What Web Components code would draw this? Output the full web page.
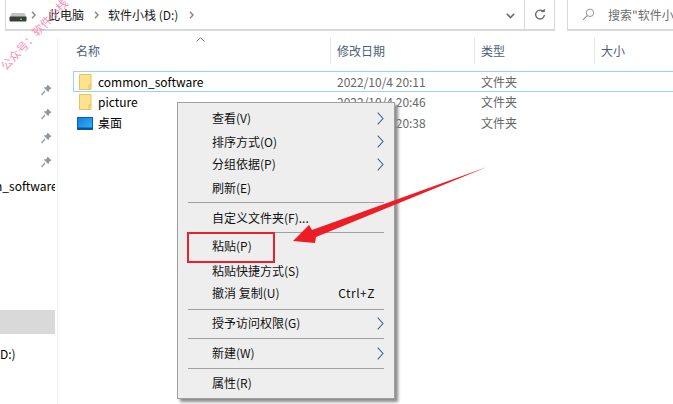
<!DOCTYPE html>
<html><head><meta charset="utf-8">
<style>
html,body{margin:0;height:100%;background:#fff;overflow:hidden}
body{font:12px/16px "Noto Sans CJK SC","Noto Sans",sans-serif;color:#111}
</style></head><body>
<template id="t-win"><style>
:host{display:grid;grid-template-rows:31px 1fr;width:673px;height:404px;position:relative;overflow:hidden}
</style><ex-toolbar></ex-toolbar><div style="display:grid;grid-template-columns:58px 1fr;min-height:0"><ex-nav></ex-nav><ex-list></ex-list></div><slot></slot></template>

<template id="t-toolbar"><style>
:host{display:flex;align-items:stretch;height:31px;box-sizing:border-box;padding-left:5px;color:#1a1a1a}
.addr{display:flex;align-items:center;width:519px;box-sizing:border-box;border:solid #d9d9d9;border-width:1px 0 2px 1px;padding-left:3px;position:relative;margin-top:-1px}
.refresh{display:flex;align-items:center;justify-content:center;width:31px;box-sizing:border-box;border:solid #d9d9d9;border-width:1px 1px 2px 1px;margin-top:-1px}
.search{display:flex;align-items:center;margin-left:12px;flex:1;box-sizing:border-box;border:solid #d9d9d9;border-width:1px 0 2px 1px;margin-top:-1px;padding-left:14px;color:#6d6d6d;white-space:nowrap;overflow:hidden}
.search svg{margin-right:13px;flex:none}
.crumb{white-space:nowrap}
.sep{flex:none}
.drop{position:absolute;right:9px;top:13px}
</style>
<div class="addr">
<svg width="18" height="9" viewBox="0 0 18 9" style="flex:none;margin-top:6px"><path d="M2.500 0h13l2 4.500H.5z" fill="#c4c4c4"/><rect x=".5" y="3.500" width="17" height="5" rx="1" fill="#3c3c3c"/><rect x="11" y="5.500" width="2" height="1.500" fill="#3fdc5a"/></svg>
<svg class="sep" width="5" height="8" viewBox="0 0 5 8" style="margin-left:4px;margin-right:12px"><path d="M1 .8 4 4 1 7.2" fill="none" stroke="#8a8a8a" stroke-width="1.5"/></svg>
<span class="crumb">此电脑</span>
<svg class="sep" width="5" height="8" viewBox="0 0 5 8" style="margin-left:10px;margin-right:9px"><path d="M1 .8 4 4 1 7.2" fill="none" stroke="#8a8a8a" stroke-width="1.5"/></svg>
<span class="crumb">软件小栈 (D:)</span>
<svg class="sep" width="5" height="8" viewBox="0 0 5 8" style="margin-left:11px"><path d="M1 .8 4 4 1 7.2" fill="none" stroke="#8a8a8a" stroke-width="1.5"/></svg>
<svg class="drop" width="9" height="6" viewBox="0 0 9 6"><path d="M.8.8 4.500 4.500 8.200.8" fill="none" stroke="#6d6d6d" stroke-width="1.600"/></svg>
</div>
<div class="refresh"><svg width="12" height="13" viewBox="0 0 12 13"><path d="M9.600 4A4.400 4.400 0 1 0 10.400 7" fill="none" stroke="#6a6a6a" stroke-width="1.400"/><path d="M6.600 4h4.200V.8z" fill="#6a6a6a"/></svg></div>
<div class="search"><svg width="13" height="13" viewBox="0 0 14 14"><circle cx="8.600" cy="5.200" r="4" fill="none" stroke="#8a8a8a"/><path d="M5.700 8.100 1 12.800" stroke="#8a8a8a" stroke-width="1.200"/></svg>搜索"软件小栈 (D:)"</div>
</template>

<template id="t-nav"><style>
:host{display:flex;flex-direction:column;box-sizing:border-box;padding-top:39px;width:58px;border-right:1px solid #f0f0f0;margin-top:7px;overflow:hidden}
.pin{height:24px;display:flex;align-items:center;justify-content:flex-end;width:52px;box-sizing:border-box}
.t{width:55px;height:24px;line-height:24px;overflow:hidden;white-space:nowrap;color:#000}
.sel{width:55px;height:24px;background:#d9d9d9;margin-top:112px}
</style>
<div class="pin"><ex-pin></ex-pin></div><div class="pin"><ex-pin></ex-pin></div><div class="pin"><ex-pin></ex-pin></div><div class="pin"><ex-pin></ex-pin></div>
<div class="t" style="margin-top:1px;text-indent:-5px">n_software</div>
<div class="sel"></div>
<div class="t" style="margin-top:8px">D:)</div>
</template>

<template id="t-list"><style>
:host{display:block;position:relative;min-width:0}
.head{display:grid;grid-template-columns:273px 144px 120px 1fr;height:26px;margin-top:7px;position:relative;color:#4c607a}
.head div{border-right:1px solid #e5e5e5;line-height:26px;box-sizing:border-box;padding-left:18px;height:26px}
.head div:nth-child(n+2){padding-left:6px}
.head div:last-of-type{border:0}
.caret{position:absolute;left:138px;top:-1px}
.rows{margin-top:7px;padding-left:15px;padding-right:2px}
</style>
<div class="head"><div>名称</div><div>修改日期</div><div>类型</div><div>大小</div><svg class="caret" width="9" height="5" viewBox="0 0 9 5"><path d="M.5 4.500 4.500.8l4 3.700" fill="none" stroke="#777"/></svg></div>
<div class="rows">
<ex-row selected name="common_software" date="2022/10/4 20:11" type="文件夹"></ex-row>
<ex-row style="height:20px" name="picture" date="2022/10/4 20:46" type="文件夹"></ex-row>
<ex-row style="height:22px" icon="desk" name="桌面" date="2022/10/4 20:38" type="文件夹"></ex-row>
</div></template>

<template id="t-menu"><style>
:host{position:absolute;left:177px;top:102px;width:218px;box-sizing:border-box;background:#eee;border:1px solid #a0a0a0;box-shadow:3px 3px 3px #8a8a8a;padding:4px 2px 1px;display:block;color:#111}
</style><slot></slot></template>

<template id="t-mi"><style>
:host{display:flex;align-items:center;height:var(--h,22px);padding-left:32px;padding-right:8px;white-space:nowrap;justify-content:space-between}
svg{display:block}
#r.k{margin-right:9px;letter-spacing:.5px}
</style><span><slot></slot></span><span id="r"></span></template>

<template id="t-ms"><style>:host{display:block;height:1px;background:#a0a0a0;margin:0 8px}</style></template>

<script>
const def=(n,id,extra)=>customElements.define(n,class extends HTMLElement{constructor(){super();this.attachShadow({mode:'open'}).append(document.getElementById(id).content.cloneNode(true));}connectedCallback(){extra&&extra(this)}});
def('ex-toolbar','t-toolbar');def('ex-nav','t-nav');def('ex-list','t-list');def('ex-win','t-win');def('ex-menu','t-menu');def('ex-ms','t-ms');
def('ex-mi','t-mi',el=>{const r=el.shadowRoot.getElementById('r');
 if(el.hasAttribute('sub'))r.innerHTML='<svg width="7" height="13" viewBox="0 0 7 13"><path d="M.7.7 6 6.500.7 12.300" fill="none" stroke="#3f6596" stroke-width="1.100"/></svg>';
 else if(el.getAttribute('key')){r.textContent=el.getAttribute('key');r.className='k';}
 if(el.getAttribute('h'))el.style.setProperty('--h',el.getAttribute('h')+'px');
 if(el.getAttribute('mb'))el.style.marginBottom=el.getAttribute('mb')+'px';});
customElements.define('ex-pin',class extends HTMLElement{constructor(){super();this.attachShadow({mode:'open'}).innerHTML='<style>:host{display:block;height:12px}</style><svg width="11" height="12" viewBox="0 0 11 12"><path d="M6.500.5 10.500 4.500 9.300 5 8 6l-.4 2.600L2.600 3.600 5 3.200 6 2z" fill="#8f979e"/><path d="M4 7 .6 11" stroke="#8f979e" stroke-width="1.200"/></svg>';}});
customElements.define('ex-row',class extends HTMLElement{constructor(){super();const s=this.attachShadow({mode:'open'});
 const a=k=>this.getAttribute(k)||'';
 const icon=a('icon')==='desk'?'<svg width="16" height="13" viewBox="0 0 16 13" style="margin:0 5px 0 -2px"><defs><linearGradient id="g" x1="0" y1="0" x2="1" y2="1"><stop offset="0" stop-color="#0f7fe0"/><stop offset="1" stop-color="#35b4f8"/></linearGradient></defs><rect x=".5" y=".5" width="15" height="12" fill="url(#g)" stroke="#0d5fa8"/><path d="M1 10.500h14v2H1z" fill="#0a4f8f"/></svg>':'<svg width="13" height="16" viewBox="0 0 13 16" style="margin-right:6px"><path d="M.5.5h11.500v15H.5z" fill="#fde28f" stroke="#e6c35c"/><path d="M10 15.500V11h2.500" fill="none" stroke="#e6c35c"/></svg>';
 s.innerHTML=`<style>:host{display:grid;grid-template-columns:257px 144px 120px 1fr;height:21px;align-items:center;box-sizing:border-box;color:#666}
 :host([selected]){box-shadow:inset 0 0 0 1px #99d1ff}
 .n{display:flex;align-items:center;padding-left:6px;color:#000}
 .d{padding-left:7px}</style><div class="n">${icon}<span>${a('name')}</span></div><div class="d">${a('date')}</div><div class="d">${a('type')}</div><div></div>`;
}});
</script>
<ex-win>
<svg style="position:absolute;left:0;top:0;pointer-events:none" width="120" height="80" viewBox="0 0 120 80"><text x="0" y="0" transform="translate(6 71) rotate(-47)" font-size="11.500" fill="#f592bc" font-family="Noto Sans CJK SC">公众号：软件小栈</text></svg>
<ex-menu>
<ex-mi sub h="22">查看(V)</ex-mi>
<ex-mi sub h="25">排序方式(O)</ex-mi>
<ex-mi sub h="20">分组依据(P)</ex-mi>
<ex-mi h="28">刷新(E)</ex-mi>
<ex-ms></ex-ms>
<ex-mi h="29">自定义文件夹(F)...</ex-mi>
<ex-ms></ex-ms>
<ex-mi h="26">粘贴(P)</ex-mi>
<ex-mi h="24">粘贴快捷方式(S)</ex-mi>
<ex-mi key="Ctrl+Z" h="20" mb="6">撤消 复制(U)</ex-mi>
<ex-ms></ex-ms>
<ex-mi sub h="26" mb="2">授予访问权限(G)</ex-mi>
<ex-ms></ex-ms>
<ex-mi sub h="28" mb="1">新建(W)</ex-mi>
<ex-ms></ex-ms>
<ex-mi h="28">属性(R)</ex-mi>
</ex-menu>
<div style="position:absolute;left:187px;top:232px;width:88px;height:31px;box-sizing:border-box;border:2px solid #e8212c"></div>
<svg style="position:absolute;left:285px;top:160px" width="210" height="90" viewBox="285 160 210 90"><path d="M487 167 316 237 315 243 293 241 309 225 312 230z" fill="#ee1c25"/></svg>
</ex-win>
</body></html>
